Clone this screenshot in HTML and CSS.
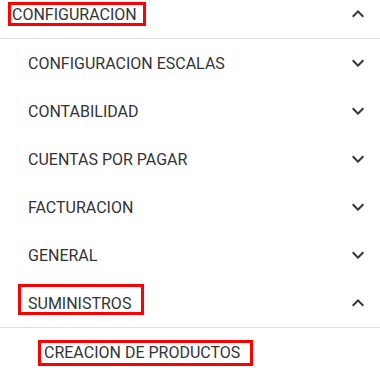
FILE: index.html
```html
<!DOCTYPE html>
<html lang="es">
<head>
<meta charset="utf-8">
<title>Menu</title>
<link rel="stylesheet" href="styles.css">
</head>
<body>
<nav class="menu">
  <div class="row top">
    <span class="label mark mark-a">CONFIGURACION</span>
    <svg class="chev" viewBox="0 0 24 24"><path d="M12 8l-6 6 1.41 1.41L12 10.83l4.59 4.58L18 14z"/></svg>
  </div>
  <div class="row sub">
    <span class="label">CONFIGURACION ESCALAS</span>
    <svg class="chev" viewBox="0 0 24 24"><path d="M16.59 8.59L12 13.17 7.41 8.59 6 10l6 6 6-6z"/></svg>
  </div>
  <div class="row sub">
    <span class="label">CONTABILIDAD</span>
    <svg class="chev" viewBox="0 0 24 24"><path d="M16.59 8.59L12 13.17 7.41 8.59 6 10l6 6 6-6z"/></svg>
  </div>
  <div class="row sub">
    <span class="label">CUENTAS POR PAGAR</span>
    <svg class="chev" viewBox="0 0 24 24"><path d="M16.59 8.59L12 13.17 7.41 8.59 6 10l6 6 6-6z"/></svg>
  </div>
  <div class="row sub">
    <span class="label">FACTURACION</span>
    <svg class="chev" viewBox="0 0 24 24"><path d="M16.59 8.59L12 13.17 7.41 8.59 6 10l6 6 6-6z"/></svg>
  </div>
  <div class="row sub">
    <span class="label">GENERAL</span>
    <svg class="chev" viewBox="0 0 24 24"><path d="M16.59 8.59L12 13.17 7.41 8.59 6 10l6 6 6-6z"/></svg>
  </div>
  <div class="row sub open">
    <span class="label mark mark-b">SUMINISTROS</span>
    <svg class="chev" viewBox="0 0 24 24"><path d="M12 8l-6 6 1.41 1.41L12 10.83l4.59 4.58L18 14z"/></svg>
  </div>
  <div class="row leaf">
    <span class="label mark mark-c">CREACION DE PRODUCTOS</span>
  </div>
</nav>
</body>
</html>
```

FILE: styles.css
```css
html, body {
  margin: 0;
  padding: 0;
  background: #ffffff;
}

body {
  width: 380px;
  height: 386px;
  overflow: hidden;
  font-family: Roboto, "Liberation Sans", sans-serif;
  font-size: 16px;
  color: #333333;
}

.menu {
  margin-top: -10px;
  display: flex;
  flex-direction: column;
}

.row {
  height: 48px;
  display: flex;
  align-items: center;
  justify-content: space-between;
  padding: 0 10px 0 12px;
  flex-shrink: 0;
}

.top {
  border-bottom: 1px solid #e0e0e0;
}

.sub {
  padding-left: 28px;
}

.open {
  border-bottom: 1px solid #e0e0e0;
}

.leaf {
  padding-left: 44px;
}

.label {
  display: inline-block;
  line-height: normal;
  white-space: nowrap;
  position: relative;
}

.chev {
  width: 24px;
  height: 24px;
  fill: #333333;
  flex-shrink: 0;
}

.mark::after {
  content: "";
  position: absolute;
  border: 3px solid #ff0000;
}

.mark-a::after {
  left: -4px;
  right: -9px;
  top: -3px;
  bottom: -2px;
}

.mark-b::after {
  left: -10px;
  right: -13px;
  top: -10px;
  bottom: -2px;
}

.mark-c::after {
  left: -6px;
  right: -13px;
  top: -3px;
  bottom: -4px;
}
```
